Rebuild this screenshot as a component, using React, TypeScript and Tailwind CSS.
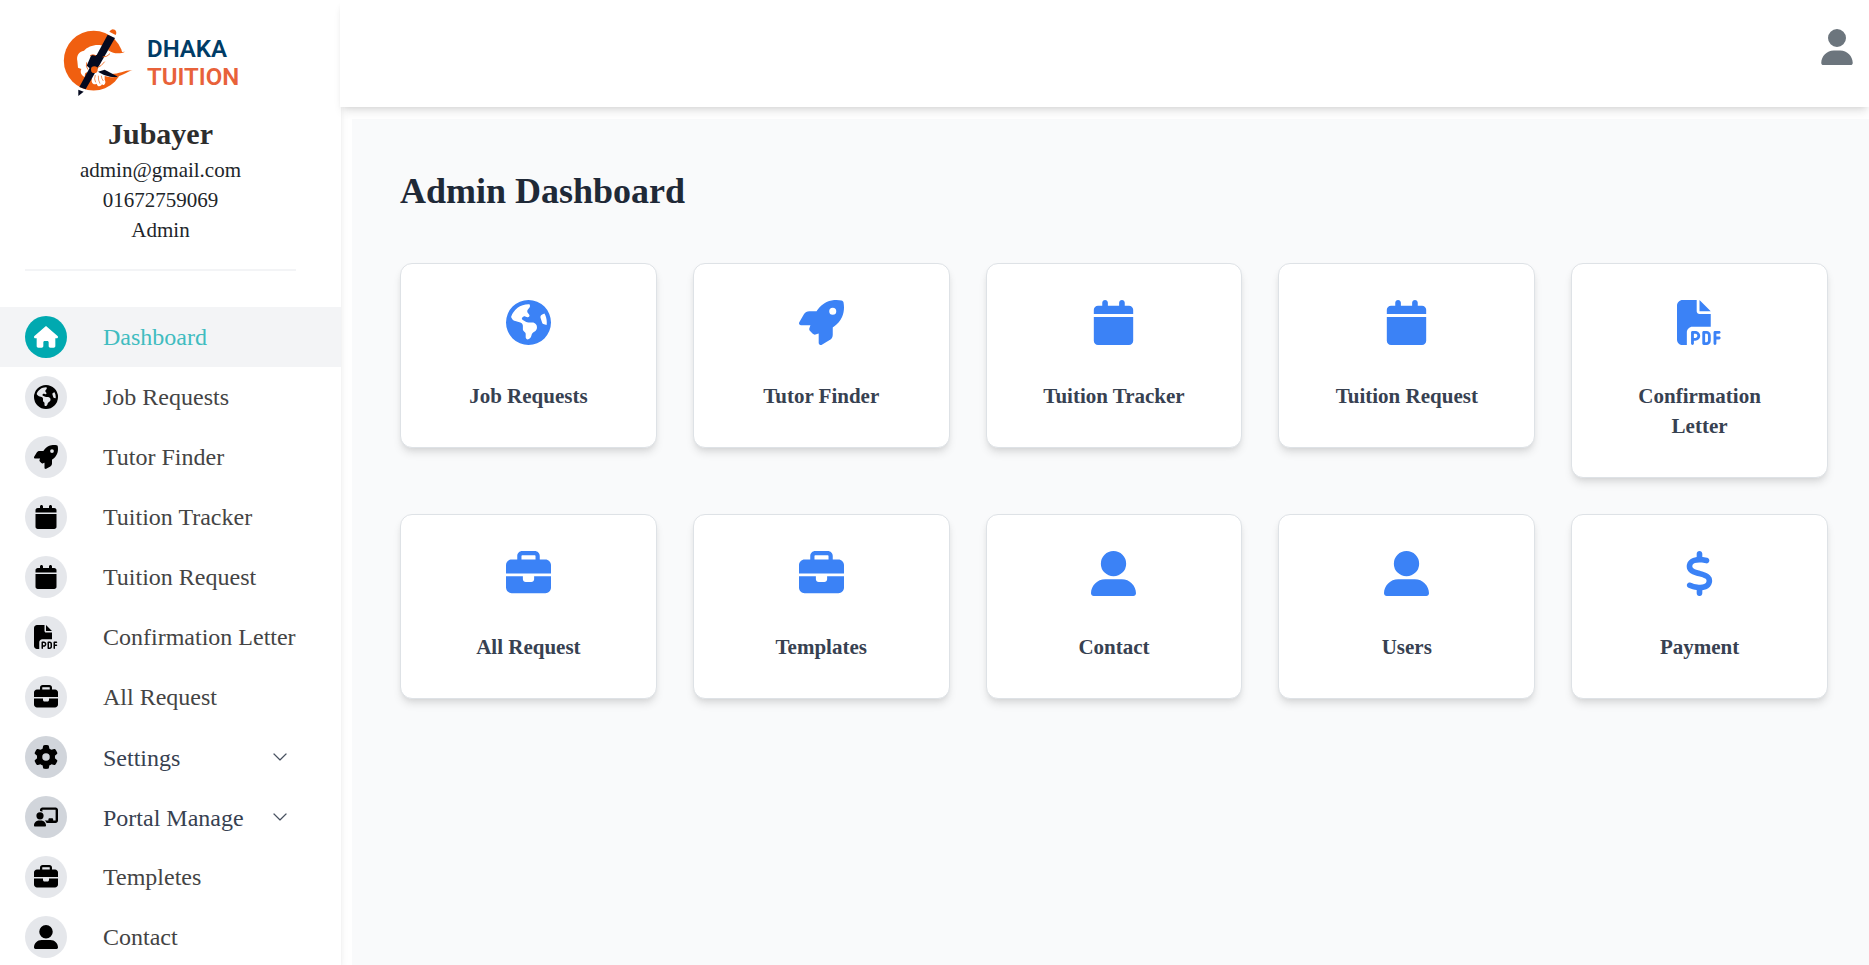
import type { IconType } from "react-icons";
import {
  FaBriefcase,
  FaCalendar,
  FaChalkboardUser,
  FaDollarSign,
  FaEarthAmericas,
  FaFilePdf,
  FaGear,
  FaHouse,
  FaRocket,
  FaUser,
  FaUserLarge,
} from "react-icons/fa6";
import { BsChevronDown } from "react-icons/bs";

type NavItem = { label: string; icon: IconType; active?: boolean; group?: boolean };
type Card = { label: string; icon: IconType };

const navItems: NavItem[] = [
  { label: "Dashboard", icon: FaHouse, active: true },
  { label: "Job Requests", icon: FaEarthAmericas },
  { label: "Tutor Finder", icon: FaRocket },
  { label: "Tuition Tracker", icon: FaCalendar },
  { label: "Tuition Request", icon: FaCalendar },
  { label: "Confirmation Letter", icon: FaFilePdf },
  { label: "All Request", icon: FaBriefcase },
  { label: "Settings", icon: FaGear, group: true },
  { label: "Portal Manage", icon: FaChalkboardUser, group: true },
  { label: "Templetes", icon: FaBriefcase },
  { label: "Contact", icon: FaUserLarge },
];

const cards: Card[] = [
  { label: "Job Requests", icon: FaEarthAmericas },
  { label: "Tutor Finder", icon: FaRocket },
  { label: "Tuition Tracker", icon: FaCalendar },
  { label: "Tuition Request", icon: FaCalendar },
  { label: "Confirmation Letter", icon: FaFilePdf },
  { label: "All Request", icon: FaBriefcase },
  { label: "Templates", icon: FaBriefcase },
  { label: "Contact", icon: FaUserLarge },
  { label: "Users", icon: FaUserLarge },
  { label: "Payment", icon: FaDollarSign },
];

function Logo() {
  return (
    <div className="flex h-[76px] shrink-0 items-start pl-[60px] pt-[2px]">
      <svg className="h-[72px] w-[76px] shrink-0" viewBox="0 0 228 216" aria-hidden="true">
        <circle cx="101" cy="107" r="89.5" fill="#f05f10" />
        {/* hand */}
        <path d="M52 108C49 92 56 80 72 77C82 66 98 59 118 60C134 62 144 72 152 78C162 84 172 84 186 82L228 88L228 134L214 136C202 139 196 146 184 150C172 156 160 158 148 156L134 153L134 164C140 174 132 184 126 178C120 188 112 184 110 176C100 182 92 172 96 162L92 152L80 142C72 146 76 152 74 156C62 150 60 140 64 132L54 128Z" fill="#fff" />
        <path d="M140 68C152 80 168 83 195 80C180 88 158 86 142 74Z" fill="#f05f10" />
        <path d="M152 147C176 148 196 134 218 136C204 138 196 148 180 152C170 156 160 156 150 152Z" fill="#f05f10" />
        {/* sleeve and shadow */}
        <path d="M114 140L134 134L174 155C152 159 130 150 114 140Z" fill="#04091f" />
        <path d="M94 90L112 90L92 132L80 122Z" fill="#04091f" />
        {/* pencil */}
        <path d="M143 29L165 39L77 193L58 186Z" fill="#04091f" />
        <path d="M57 188L76 196L72 200L55 192Z" fill="#fff" />
        <path d="M55 194L71 200L55 213Z" fill="#04091f" />
        <path d="M148 20Q154 9 164 14Q172 19 167 30Z" fill="#f05f10" />
        {/* thumb and finger creases */}
        <circle cx="103" cy="134" r="10" fill="#f05f10" />
        <path d="M90 92Q98 86 108 92M128 96Q142 96 150 86M80 112Q76 124 84 134M112 128Q124 124 134 110" stroke="#f05f10" strokeWidth="2.5" fill="none" />
        <path d="M106 150Q101 162 107 172M115 152Q114 166 120 176M124 152Q124 160 130 168" stroke="#f05f10" strokeWidth="2" fill="none" />
      </svg>
      <div className="ml-[11px] pt-[10px] font-['Roboto'] text-[24px] leading-[28.4px] font-semibold">
        <div className="text-[#003c66]">DHAKA</div>
        <div className="text-[#e8623a]">TUITION</div>
      </div>
    </div>
  );
}

function Sidebar() {
  return (
    <aside className="flex h-full w-[341px] shrink-0 flex-col overflow-hidden bg-white pt-[23px] shadow-[0_6px_9px_-1.5px_rgba(0,0,0,0.1),0_3px_6px_-3px_rgba(0,0,0,0.1)]">
      <Logo />
      <div className="ml-[25px] mt-[14px] w-[271px] shrink-0 border-b-2 border-[#f3f4f6] pb-6 text-center text-[21px] leading-[30px] text-[#212529]">
        <h2 className="text-[30px] leading-[42px] font-bold text-[#2d2d2d]">Jubayer</h2>
        <p>admin@gmail.com</p>
        <p>01672759069</p>
        <p>Admin</p>
      </div>
      <nav className="mt-9 shrink-0">
        {navItems.map(({ label, icon: Icon, active, group }) => (
          <a
            key={label}
            className={`flex h-[60px] items-center pl-[25px] text-2xl ${active ? "bg-[#f3f4f6] text-[#40bcc0]" : group ? "text-[#374151]" : "text-[#444444]"}`}
          >
            <span
              className={`flex size-[42px] shrink-0 items-center justify-center rounded-full ${active ? "bg-[#00a9b0] text-white" : group ? "bg-[#d1d5db] text-black" : "bg-[#e5e7eb] text-black"}`}
            >
              <Icon className="size-6" />
            </span>
            <span className={`ml-9 w-[169px] whitespace-nowrap ${group ? "pt-[2px]" : ""}`}>{label}</span>
            {group && <BsChevronDown className="size-4 stroke-[0.3] text-[#374151]" />}
          </a>
        ))}
      </nav>
    </aside>
  );
}

function DashboardCard({ label, icon: Icon }: Card) {
  return (
    <div className="flex flex-col items-center rounded-xl border border-[#dee2e6] bg-white p-9 text-center shadow-[0_6px_9px_-1.5px_rgba(0,0,0,0.1),0_3px_6px_-3px_rgba(0,0,0,0.1)]">
      <Icon className="size-[45px] text-[#3b82f6]" />
      <h3 className="mt-9 text-[21px] leading-[30px] font-bold text-[#374151]">{label}</h3>
    </div>
  );
}

export default function App() {
  return (
    <div className="flex h-[965px] w-full overflow-hidden bg-white font-['Liberation_Serif',serif]">
      <Sidebar />
      <div className="-ml-px flex min-w-0 grow flex-col">
        <header className="relative flex h-[107px] shrink-0 items-start justify-end bg-white pr-4 pt-[29px] shadow-[0_6px_9px_-1.5px_rgba(0,0,0,0.1),0_3px_6px_-3px_rgba(0,0,0,0.1)]">
          <FaUser className="h-9 w-8 text-[#6c757d]" />
        </header>
        <main className="ml-3 mt-3 grow bg-[#f9fafb] pl-12 pr-[41px] pt-12">
          <h1 className="text-[36px] leading-[48px] font-bold text-[#1f2937]">Admin Dashboard</h1>
          <div className="mt-12 grid grid-cols-5 items-start gap-9">
            {cards.map((card) => (
              <DashboardCard key={card.label} {...card} />
            ))}
          </div>
        </main>
      </div>
    </div>
  );
}
